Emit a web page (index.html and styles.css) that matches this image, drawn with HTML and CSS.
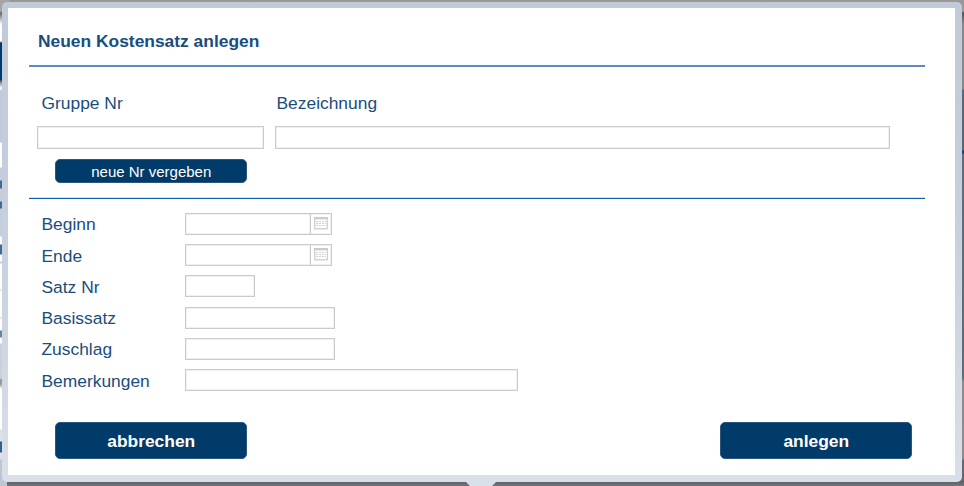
FILE: index.html
```html
<!DOCTYPE html>
<html lang="de">
<head>
<meta charset="utf-8">
<title>Neuen Kostensatz anlegen</title>
<link rel="stylesheet" href="styles.css">
</head>
<body>
<div class="edge edge-left"></div>
<div class="edge edge-right"></div>
<div class="dialog-shadow"></div>
<main class="dialog">
  <form class="content">
    <h1 class="title">Neuen Kostensatz anlegen</h1>
    <section class="group">
      <div class="group-fields">
        <label class="column number"><span>Gruppe Nr</span><input type="text"></label>
        <label class="column name"><span>Bezeichnung</span><input type="text"></label>
      </div>
      <button type="button" class="button small">neue Nr vergeben</button>
    </section>
    <section class="details">
      <label class="row"><span>Beginn</span><span class="date"><input type="text"><svg width="20" height="20" viewBox="0 1 20 20"><path fill="#ececec" d="M3 4h14v13H3z"/><path fill="#fff" d="M5 7h10v8H5z"/><path fill="#cbcbcb" d="M3 4h14v2H3z"/><path fill="none" stroke="#d1d1d1" d="M3.5 6v9.5h13V6"/><path stroke="#d2d2d2" stroke-dasharray="2 1" d="M5 8.5h10M5 10.5h10M5 12.5h10"/></svg></span></label>
      <label class="row"><span>Ende</span><span class="date"><input type="text"><svg width="20" height="20" viewBox="0 1 20 20"><path fill="#ececec" d="M3 4h14v13H3z"/><path fill="#fff" d="M5 7h10v8H5z"/><path fill="#cbcbcb" d="M3 4h14v2H3z"/><path fill="none" stroke="#d1d1d1" d="M3.5 6v9.5h13V6"/><path stroke="#d2d2d2" stroke-dasharray="2 1" d="M5 8.5h10M5 10.5h10M5 12.5h10"/></svg></span></label>
      <label class="row"><span>Satz Nr</span><input class="short" type="text"></label>
      <label class="row"><span>Basissatz</span><input class="medium" type="text"></label>
      <label class="row"><span>Zuschlag</span><input class="medium" type="text"></label>
      <label class="row"><span>Bemerkungen</span><input class="long" type="text"></label>
    </section>
    <footer class="actions">
      <button type="button" class="button">abbrechen</button>
      <button type="button" class="button">anlegen</button>
    </footer>
  </form>
</main>
<div class="pointer"></div>
</body>
</html>
```

FILE: styles.css
```css
* { box-sizing: border-box; }
html { height: 100%; overflow: hidden; }
body {
  height: 486px;
  margin: 0;
  padding: 2px;
  overflow: hidden;
  background: #9a9998;
  color: #1a4d7d;
  font: 17.4px/20px "Liberation Sans", Arial, sans-serif;
}
.edge { position: absolute; top: 0; width: 10px; height: 486px; }
.edge-left {
  left: 0;
  background: linear-gradient(#a5a5a5 0 11px, #666 13px, #eee 23px, #fff 26px 41px, #888 42px, #003b6b 43px 80px, #666 81px, #fff 88px, #c1cad8 91px 142px, #fff 143px 167px, #c5ccda 168px 180px, #426b90 181px 188px, #c5ccda 189px 201px, #426b90 202px 208px, #c5ccda 209px 236px, #fff 237px 244px, #426b90 245px 254px, #fff 255px 261px, #ccd1dc 262px 263px, #fff 264px 289px, #ccd1dc 290px, #fff 291px 317px, #ccd1dc 318px, #fff 319px 330px, #6685a2 331px 337px, #fff 338px 343px, #c9d1df 344px 378px, #999 380px 384px, #fff 389px 429px, #dce0e8 430px 441px, #335f89 442px 452px, #dce0e8 453px 459px, #bdc6d5 460px);
}
.edge-right {
  right: 0;
  background: linear-gradient(#9a9998 0 11px, #555 13px, #888 24px 89px, #5d6673 90px 150px, #173f70 151px 153px, #626c79 154px 239px, #626c79 378px, #8c8c8c 382px 459px, #666872 460px);
}
.dialog-shadow {
  position: absolute;
  left: 7px;
  right: 0;
  bottom: 0;
  height: 5px;
  background: linear-gradient(#5d5e66, #73747c);
}
.dialog {
  position: relative;
  height: 480px;
  padding: 6px 7px 7px 6px;
  border-radius: 5px;
  background: linear-gradient(#c0cad9, #c8cfde 48%, #d9e0e9);
}
.content {
  display: flex;
  flex-direction: column;
  height: 467px;
  padding: 0 30px 0 21px;
  background: #fff;
}
.title {
  height: 59px;
  margin: 0;
  padding: 23px 0 0 9px;
  border-bottom: 2px solid #5d8bc1;
  font-size: 17.4px;
  line-height: 20px;
}
.group {
  height: 132px;
  padding: 26px 35px 0 7.5px;
  border-bottom: 1px solid #165da8;
  box-shadow: inset 0 -1px #d4e1ef;
}
.group-fields { display: flex; gap: 11px; }
.column { display: flex; flex-direction: column; gap: 13px; }
.column span { padding-left: 5px; }
.column.name span { padding-left: 1.5px; }
.number { width: 227.5px; }
.name { flex: 1; }
input {
  display: block;
  width: 100%;
  height: 23px;
  margin: 0;
  padding: 2px 4px;
  border: 1px solid #cbcbcb;
  box-shadow: inset 0 0 0 1px #f0f0f0;
  outline: 0;
  background: #fff;
  color: inherit;
  font: inherit;
}
.details {
  display: grid;
  grid-auto-rows: 31.25px;
  padding: 9.3px 0 0 12.5px;
}
.row { display: grid; grid-template-columns: 143.5px auto; justify-content: start; align-items: center; }
.row > span:first-child { padding-top: 1px; }
.row > input { height: 22px; }
.date {
  display: flex;
  width: 147px;
  height: 22px;
  border: 1px solid #cbcbcb;
  box-shadow: inset 0 0 0 1px #f0f0f0;
}
.date input { width: 125px; height: 20px; border-width: 0 1px 0 0; }
.date svg { flex: none; }
.short { width: 70px; }
.medium { width: 150px; }
.long { width: 333px; }
.button {
  display: block;
  width: 191.5px;
  height: 37px;
  padding: 1px 0 0;
  border: 1px solid #2a5680;
  border-radius: 5px;
  background: #003b69;
  color: #fff;
  font: bold 17.4px/20px "Liberation Sans", Arial, sans-serif;
}
.small {
  height: 24px;
  margin: 10px 0 0 18.5px;
  padding-left: 1px;
  font-size: 15px;
  font-weight: normal;
}
.actions {
  display: flex;
  justify-content: space-between;
  margin-top: auto;
  padding: 0 13.5px 16px 26px;
}
.actions .button { padding-left: 1px; }
.pointer {
  position: absolute;
  bottom: 0;
  left: 466px;
  width: 30px;
  height: 4px;
  background: #d9e0e9;
  clip-path: polygon(0 0, 100% 0, 26px 100%, 4px 100%);
}
```
